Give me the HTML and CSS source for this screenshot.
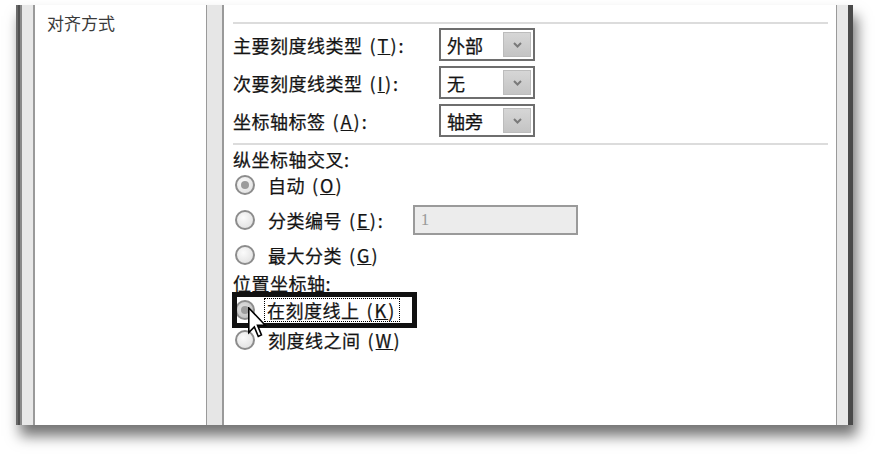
FILE: index.html
```html
<!DOCTYPE html>
<html lang="zh-CN">
<head>
<meta charset="utf-8">
<title>坐标轴选项</title>
<link rel="stylesheet" href="styles.css">
</head>
<body>
<div class="dialog">
  <div class="frame-left"></div>
  <div class="nav">
    <div class="nav-item">对齐方式</div>
  </div>
  <div class="divider"></div>
  <div class="main">
    <div class="sep first"></div>
    <div class="field">
      <span class="label">主要刻度线类型<span class="key">(<u>T</u>):</span></span>
      <span class="select"><span class="val">外部</span><span class="btn"><svg viewBox="0 0 10 8" width="11" height="8"><path d="M1.5 2 L5 5.5 L8.5 2" fill="none" stroke="#7a7a7a" stroke-width="2"/></svg></span></span>
    </div>
    <div class="field">
      <span class="label">次要刻度线类型<span class="key">(<u>I</u>):</span></span>
      <span class="select"><span class="val">无</span><span class="btn"><svg viewBox="0 0 10 8" width="11" height="8"><path d="M1.5 2 L5 5.5 L8.5 2" fill="none" stroke="#7a7a7a" stroke-width="2"/></svg></span></span>
    </div>
    <div class="field">
      <span class="label">坐标轴标签<span class="key">(<u>A</u>):</span></span>
      <span class="select"><span class="val">轴旁</span><span class="btn"><svg viewBox="0 0 10 8" width="11" height="8"><path d="M1.5 2 L5 5.5 L8.5 2" fill="none" stroke="#7a7a7a" stroke-width="2"/></svg></span></span>
    </div>
    <div class="sep second"></div>
    <div class="group-title t1">纵坐标轴交叉:</div>
    <div class="radio-row r1"><span class="radio checked"></span><span class="rtext">自动<span class="key">(<u>O</u>)</span></span></div>
    <div class="radio-row r2"><span class="radio"></span><span class="rtext">分类编号<span class="key">(<u>E</u>):</span></span><span class="num">1</span></div>
    <div class="radio-row r3"><span class="radio"></span><span class="rtext">最大分类<span class="key">(<u>G</u>)</span></span></div>
    <div class="group-title t2">位置坐标轴:</div>
    <div class="radio-row r4"><span class="radio checked hot"></span><span class="rtext focus">在刻度线上<span class="key">(<u>K</u>)</span></span></div>
    <div class="radio-row r5"><span class="radio"></span><span class="rtext">刻度线之间<span class="key">(<u>W</u>)</span></span></div>
    <div class="highlight"></div>
    <svg class="cursor" viewBox="0 0 12 20" width="19" height="32"><path d="M0.5 0.5 L0.5 16 L4 12.5 L6.5 18.5 L8.5 17.5 L6 11.5 L11 11.5 Z" fill="#fff" stroke="#000" stroke-width="1"/></svg>
  </div>
  <div class="frame-right"></div>
</div>
</body>
</html>
```
FILE: styles.css
```css
html, body {
  margin: 0;
  padding: 0;
}
body {
  width: 875px;
  height: 454px;
  overflow: hidden;
  background: #ffffff;
  font-family: "Noto Sans CJK SC", "Noto Sans", sans-serif;
  color: #141414;
}
.dialog {
  margin-left: 16px;
  margin-top: 5px;
  width: 837px;
  height: 420px;
  display: flex;
  background: #fff;
  box-shadow: 4px 11px 13px rgba(0, 0, 0, 0.55);
}
.frame-left {
  flex: none;
  width: 17px;
  background: linear-gradient(to right, #6a6a6a 0, #6a6a6a 2px, #505050 2px, #505050 4px, #8a8a8a 4px, #8a8a8a 6px, #e8e8e8 6px);
}
.nav {
  flex: none;
  width: 173px;
  border-left: 2px solid #9a9a9a;
  background: #fff;
  box-sizing: border-box;
  padding: 8px 0 0 12px;
}
.nav-item {
  font-size: 17px;
  line-height: 20px;
  color: #3a3a3a;
}
.divider {
  flex: none;
  width: 15px;
  background: #e6e6e6;
  border-left: 1px solid #9a9a9a;
  border-right: 2px solid #9a9a9a;
}
.main {
  position: relative;
  flex: none;
  width: 612px;
  padding: 17px 8px 0 9px;
  box-sizing: border-box;
  display: flex;
  flex-direction: column;
  align-items: flex-start;
  -webkit-text-stroke: 0.25px #141414;
}
.sep {
  align-self: stretch;
  height: 2px;
  background: #dcdcdc;
}
.field {
  display: flex;
  align-items: center;
  height: 33px;
  margin-top: 5px;
}
.sep.first + .field {
  margin-top: 4px;
}
.label {
  width: 206px;
  font-size: 18px;
  line-height: 22px;
  letter-spacing: 0.5px;
}
.key {
  margin-left: 7px;
  letter-spacing: 2px;
}
.select {
  width: 96px;
  height: 33px;
  box-sizing: border-box;
  border: 2px solid #6e6e6e;
  background: #fff;
  display: flex;
  align-items: center;
  justify-content: space-between;
  padding: 0 2px 0 6px;
}
.val {
  font-size: 18px;
  line-height: 22px;
}
.btn {
  width: 28px;
  height: 25px;
  box-sizing: border-box;
  background: linear-gradient(#d6d6d6, #c4c4c4);
  border: 1px solid #bcbcbc;
  display: flex;
  align-items: center;
  justify-content: center;
}
.sep.second {
  margin-top: 6px;
}
.group-title {
  font-size: 18px;
  line-height: 22px;
  letter-spacing: 0.5px;
}
.t1 {
  margin-top: 3px;
}
.t2 {
  margin-top: 8px;
  line-height: 18px;
  height: 18px;
}
.radio-row {
  display: flex;
  align-items: center;
  height: 24px;
  margin-left: 2px;
}
.r1 { margin-top: 3px; }
.r2 { margin-top: 6px; height: 34px; }
.r3 { margin-top: 7px; height: 22px; }
.r4 { margin-top: 6px; }
.r5 { margin-top: 7px; height: 22px; }
.radio {
  width: 20px;
  height: 20px;
  box-sizing: border-box;
  border-radius: 50%;
  border: 2px solid #8c8c8c;
  background: radial-gradient(circle at 40% 35%, #fbfbfb, #dcdcdc);
  margin-right: 13px;
  flex: none;
  position: relative;
}
.radio.checked::after {
  content: "";
  position: absolute;
  left: 4px;
  top: 4px;
  width: 8px;
  height: 8px;
  border-radius: 50%;
  background: #9c9c9c;
}
.radio.hot {
  background: radial-gradient(circle at 40% 35%, #e0e0e0, #b8b8b8);
}
.rtext {
  font-size: 18px;
  line-height: 22px;
  letter-spacing: 0.5px;
}
.rtext.focus {
  outline: 1px dotted #000;
  outline-offset: 0;
  padding: 0 3px 0 2px;
  margin-left: -3px;
}
.num {
  margin-left: 28px;
  width: 165px;
  height: 30px;
  box-sizing: border-box;
  border: 2px solid #9a9a9a;
  background: #ececec;
  color: #9a9a9a;
  -webkit-text-stroke: 0;
  font-family: "Liberation Serif", serif;
  font-size: 17px;
  line-height: 26px;
  padding-left: 6px;
}
.highlight {
  position: absolute;
  left: 8px;
  top: 287px;
  width: 185px;
  height: 36px;
  box-sizing: border-box;
  border: 5px solid #111;
}
.cursor {
  position: absolute;
  left: 24px;
  top: 302px;
  -webkit-text-stroke: 0;
}
.frame-right {
  flex: none;
  width: 17px;
  background: linear-gradient(to right, #9a9a9a 0, #9a9a9a 1px, #e8e8e8 1px, #e8e8e8 12px, #4a4a4a 12px);
}
```
